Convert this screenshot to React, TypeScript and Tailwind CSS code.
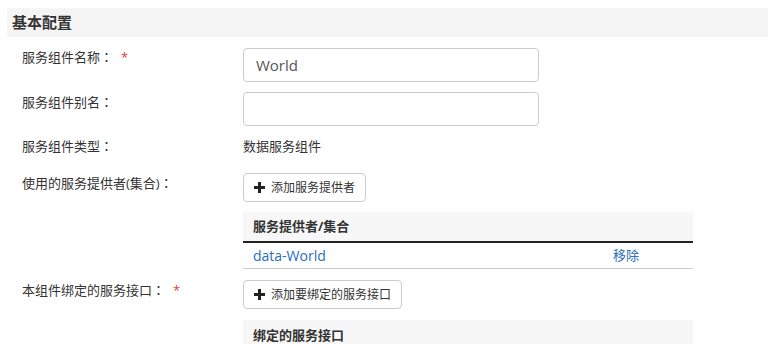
import React from "react";

const font = { fontFamily: '"Open Sans", "Noto Sans CJK SC", sans-serif' };
const colonFont = { fontFamily: '"Noto Sans CJK TC", sans-serif' };

function Plus() {
  return (
    <svg width="11" height="11" viewBox="0 0 11 11" className="shrink-0">
      <rect x="4" y="0" width="3" height="11" fill="#222" />
      <rect x="0" y="4" width="11" height="3" fill="#222" />
    </svg>
  );
}

function Label({ text, required, pt = "pt-0" }: { text: string; required?: boolean; pt?: string }) {
  return (
    <div className={`w-[221px] shrink-0 text-[13px] leading-[18px] text-[#333] ${pt}`}>
      {text}
      <span style={colonFont}>：</span>
      {required && <span className="ml-[8px] text-[#e4393c]">*</span>}
    </div>
  );
}

function Btn({ text }: { text: string }) {
  return (
    <button className="flex h-[29px] items-center gap-[6px] rounded-[4px] border border-[#ccc] bg-white pl-[10px] pr-[10px] text-[12px] text-[#333]">
      <Plus />
      <span>{text}</span>
    </button>
  );
}

export default function App() {
  return (
    <div className="h-[344px] w-[768px] overflow-hidden bg-white pt-[8px]" style={font}>
      <div className="ml-[7px] flex h-[29px] items-center bg-[#f5f5f5] pl-[5px] text-[15px] font-bold text-[#333]">
        基本配置
      </div>
      <div className="pl-[22px]">
        <div className="mt-[11px] flex">
          <Label text="服务组件名称" required pt="pt-0" />
          <div className="flex h-[34px] w-[296px] items-center rounded-[4px] border border-[#ccc] px-[12px] text-[15px] text-[#555]">
            World
          </div>
        </div>
        <div className="mt-[10px] flex">
          <Label text="服务组件别名" pt="pt-[1px]" />
          <div className="h-[34px] w-[296px] rounded-[4px] border border-[#ccc]" />
        </div>
        <div className="mt-[11px] flex items-center">
          <Label text="服务组件类型" />
          <div className="text-[13px] leading-[18px] text-[#333]">数据服务组件</div>
        </div>
        <div className="mt-[18px] flex">
          <Label text="使用的服务提供者(集合)" pt="pt-[1px]" />
          <div className="flex w-[450px] flex-col">
            <div className="flex">
              <Btn text="添加服务提供者" />
            </div>
            <div className="mt-[10px] flex h-[31px] items-center border-b-2 border-[#222] bg-[#f7f7f7] pl-[10px] text-[13px] font-bold text-[#333]">
              服务提供者/集合
            </div>
            <div className="flex h-[26px] items-center border-b border-[#ccc] pl-[10px] text-[14px] text-[#2a6ebb]">
              <span className="w-[360px]">data-World</span>
              <span className="text-[13px]">移除</span>
            </div>
          </div>
        </div>
        <div className="mt-[11px] flex">
          <Label text="本组件绑定的服务接口" required pt="pt-[1px]" />
          <div className="flex w-[450px] flex-col">
            <div className="flex">
              <Btn text="添加要绑定的服务接口" />
            </div>
            <div className="mt-[11px] flex h-[31px] items-center bg-[#f7f7f7] pl-[10px] text-[13px] font-bold text-[#333]">
              绑定的服务接口
            </div>
          </div>
        </div>
      </div>
    </div>
  );
}
